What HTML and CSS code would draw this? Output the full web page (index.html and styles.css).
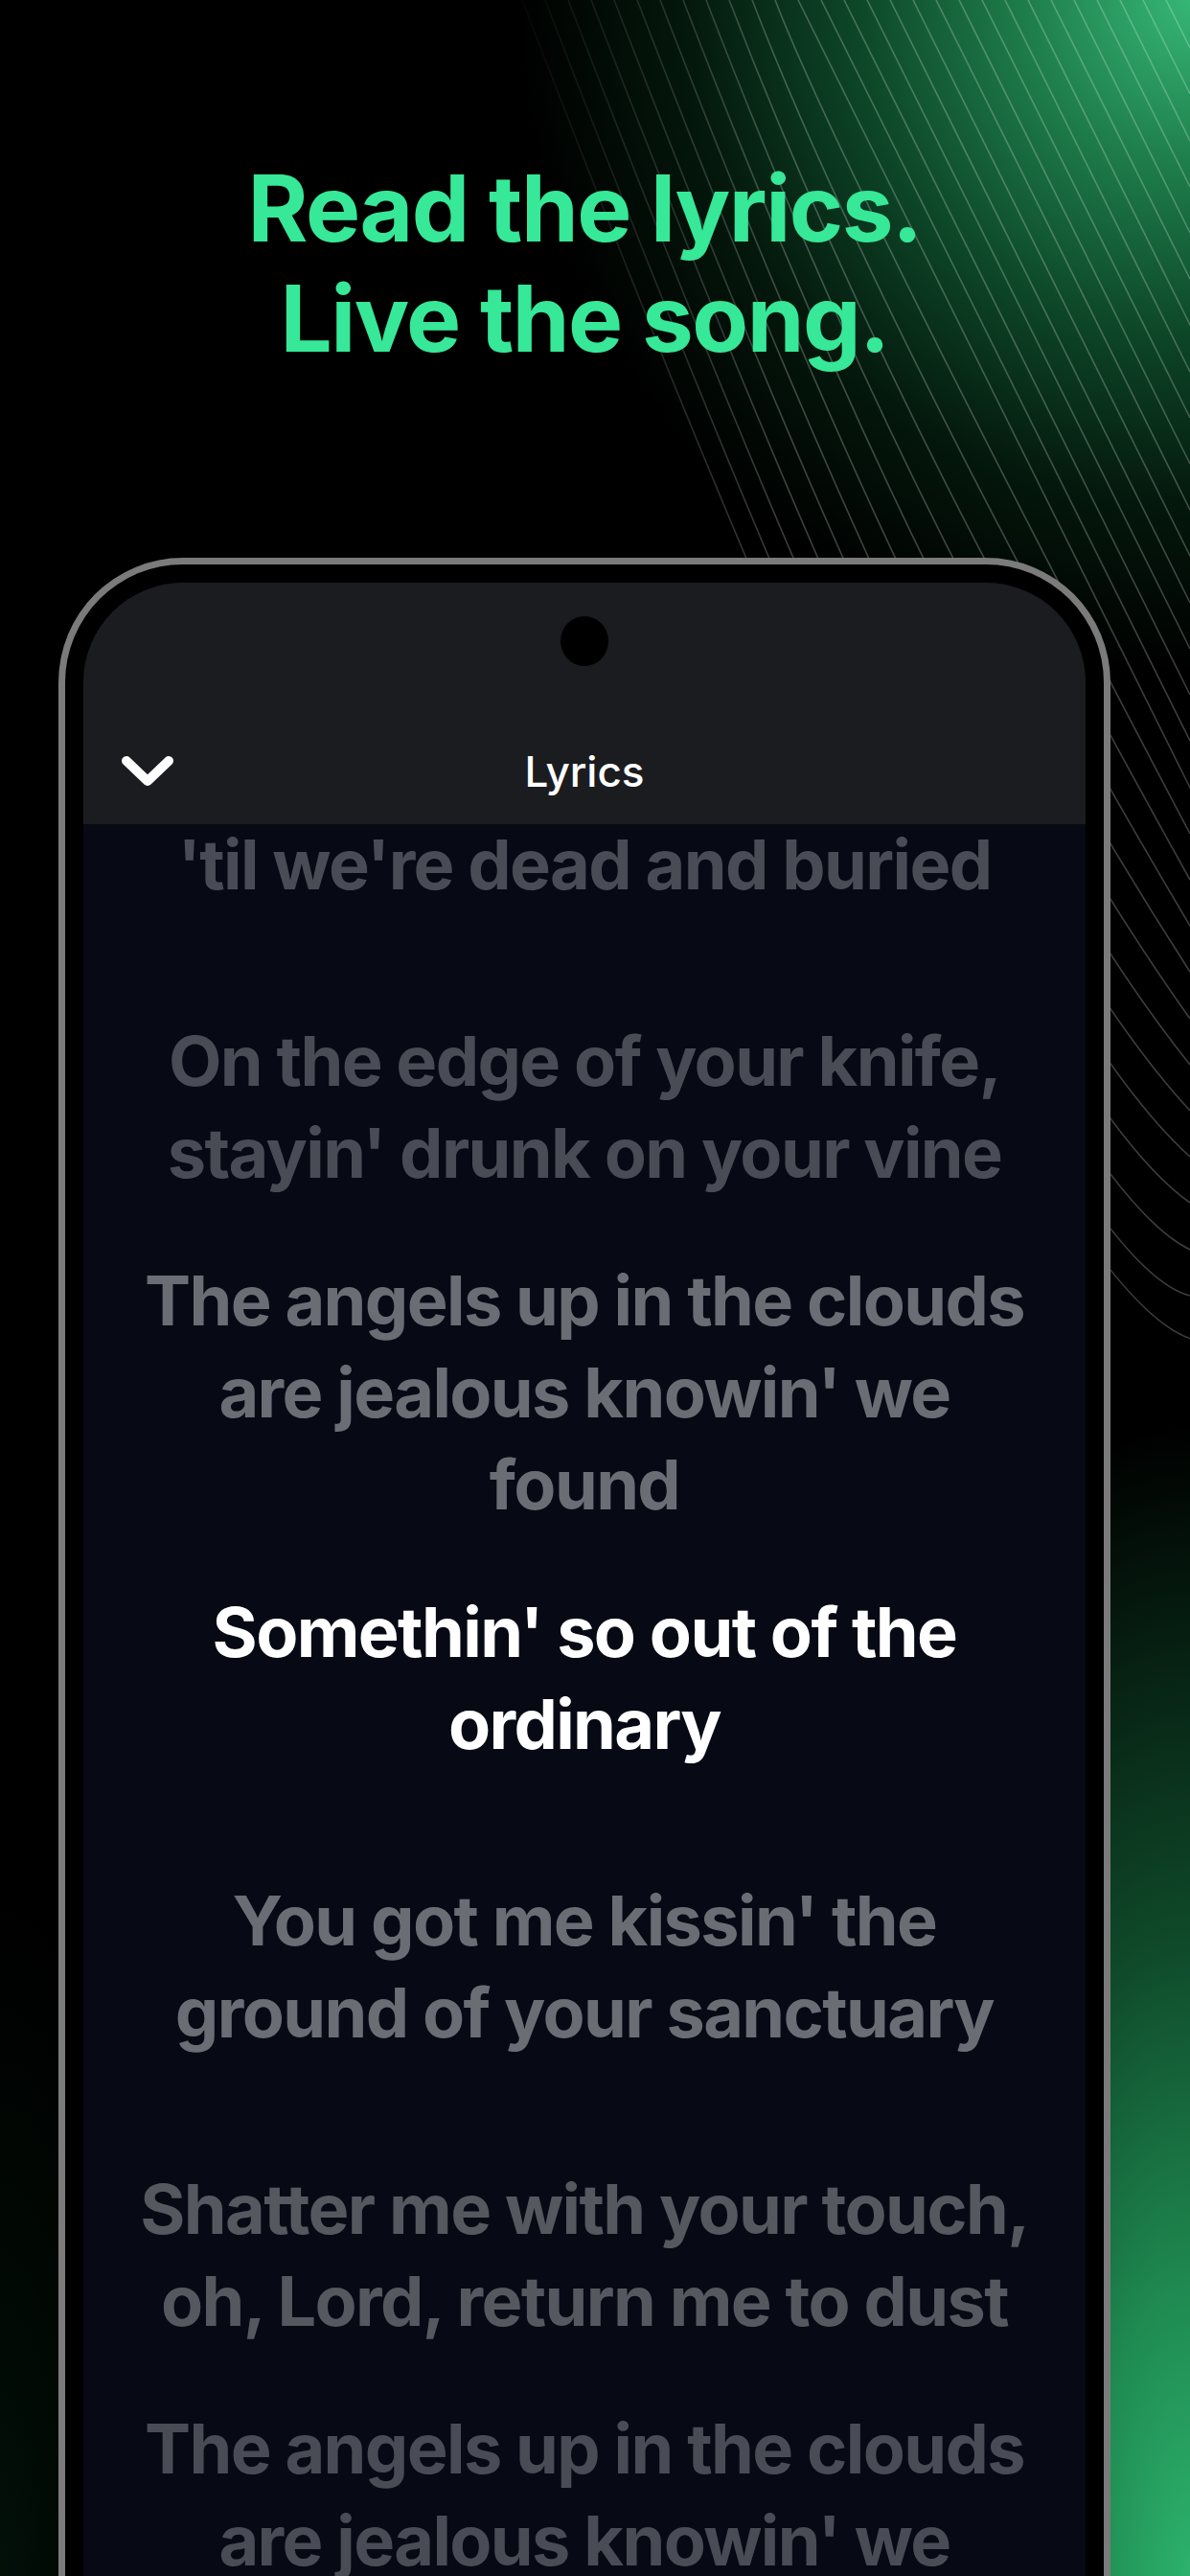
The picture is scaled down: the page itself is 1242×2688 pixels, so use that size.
FILE: index.html
```html
<!DOCTYPE html>
<html lang="en">
<head>
    <meta charset="UTF-8">
    <meta name="viewport" content="width=device-width, initial-scale=1.0">
    <title>Lyrics</title>
    <link rel="stylesheet" href="styles.css">
</head>
<body>

    <!-- Background line pattern -->
    <svg class="bg-lines" width="1242" height="2688" viewBox="0 0 1242 2688">
        <defs>
            <linearGradient id="fade" gradientUnits="userSpaceOnUse" x1="520" y1="0" x2="820" y2="0">
                <stop offset="0" stop-color="#fff" stop-opacity="0"/>
                <stop offset="1" stop-color="#fff" stop-opacity="0.24"/>
            </linearGradient>
        </defs>
        <g fill="none" stroke="url(#fade)" stroke-width="1.6">
            <path d="M545 0 Q1083.5 1400 1260 1400"/>
            <path d="M569 0 Q1072.8 1310 1242 1352"/>
            <path d="M593 0 Q1061.1 1217 1242 1304"/>
            <path d="M617 0 Q1047.3 1119 1242 1255"/>
            <path d="M641 0 Q1033.1 1019 1242 1207"/>
            <path d="M665 0 Q1017.3 916 1242 1159"/>
            <path d="M689 0 Q999.8 808 1242 1111"/>
            <path d="M713 0 Q980.4 695 1242 1063"/>
            <path d="M737 0 Q957.2 573 1242 1014"/>
            <path d="M761 0 Q933 447 1242 966"/>
            <path d="M785 0 Q906.3 315 1242 918"/>
            <path d="M809 0 Q876.6 176 1242 870"/>
            <path d="M833 0 L1242 822"/>
            <path d="M857 0 L1242 773"/>
            <path d="M881 0 L1242 725"/>
            <path d="M905 0 L1242 677"/>
            <path d="M929 0 L1242 629"/>
            <path d="M953 0 L1242 580"/>
            <path d="M977 0 L1242 532"/>
            <path d="M1001 0 L1242 484"/>
            <path d="M1025 0 L1242 436"/>
            <path d="M1049 0 L1242 388"/>
            <path d="M1073 0 L1242 339"/>
            <path d="M1097 0 L1242 291"/>
            <path d="M1121 0 L1242 243"/>
            <path d="M1145 0 L1242 195"/>
            <path d="M1169 0 L1242 147"/>
            <path d="M1193 0 L1242 98"/>
            <path d="M1217 0 L1242 50"/>
        </g>
    </svg>

    <main class="page">
        <h1 class="headline">Read the lyrics.<br>Live the song.</h1>

        <!-- Phone mockup -->
        <div class="phone">
            <div class="screen">
                <div class="top-bar">
                    <div class="camera"></div>
                    <div class="app-bar">
                        <svg class="chevron" width="58" height="36" viewBox="0 0 58 36">
                            <polyline points="7,7 29,28 51,7" fill="none" stroke="#fff" stroke-width="10" stroke-linecap="round" stroke-linejoin="round"/>
                        </svg>
                        <span class="title">Lyrics</span>
                        <span></span>
                    </div>
                </div>

                <div class="lyrics">
                    <p class="verse faded">'til we're dead and buried</p>
                    <p class="verse far faded">On the edge of your knife,<br>stayin' drunk on your vine</p>
                    <p class="verse near">The angels up in the clouds<br>are jealous knowin' we<br>found</p>
                    <p class="verse active">Somethin' so out of the<br>ordinary</p>
                    <p class="verse far near">You got me kissin' the<br>ground of your sanctuary</p>
                    <p class="verse far mid">Shatter me with your touch,<br>oh, Lord, return me to dust</p>
                    <p class="verse faded">The angels up in the clouds<br>are jealous knowin' we</p>
                </div>
            </div>
        </div>
    </main>

</body>
</html>
```

FILE: styles.css
```css
* {
    margin: 0;
    padding: 0;
    box-sizing: border-box;
}
body {
    width: 1242px;
    height: 2688px;
    overflow: hidden;
    position: relative;
    font-family: Inter, "Liberation Sans", sans-serif;
    background:
        radial-gradient(ellipse 700px 700px at 100% 0%, #36b676 0%, #1e7c4a 25%, #0d4628 50%, #04180c 75%, rgba(0,0,0,0) 100%),
        radial-gradient(ellipse 430px 1200px at 100% 100%, #2db26c 0%, #1f8a51 25%, #0f4a2a 55%, rgba(0,0,0,0) 100%),
        radial-gradient(ellipse 160px 700px at 0% 100%, #021008 0%, rgba(0,0,0,0) 100%),
        #000;
}
/* decorative lines behind everything */
.bg-lines {
    position: absolute;
    top: 0;
    left: 0;
}
.page {
    position: relative;
    width: 1098px;
    margin-left: 61px;
}
.headline {
    padding-top: 160px;
    font-size: 96px;
    line-height: 115px;
    font-weight: 700;
    letter-spacing: -1.5px;
    color: #36e897;
    text-align: center;
}
/* Phone */
.phone {
    margin-top: 192px;
    height: 2200px;
    background: #000;
    border: 7px solid #7b7b7b;
    border-bottom: none;
    border-radius: 130px 130px 0 0;
    padding: 19px 19px 0;
}
.screen {
    height: 100%;
    border-radius: 104px 104px 0 0;
    overflow: hidden;
    background: #070914;
}
.top-bar {
    height: 252px;
    background: #1b1c20;
    padding-top: 35px;
}
.camera {
    width: 50px;
    height: 52px;
    margin: 0 auto;
    border-radius: 50%;
    background: #000;
}
.app-bar {
    margin-top: 55px;
    height: 110px;
    padding: 0 38px;
    display: grid;
    grid-template-columns: 1fr auto 1fr;
    align-items: center;
}
.title {
    color: #fff;
    font-size: 44px;
    font-weight: 500;
}
/* Lyrics */
.lyrics {
    margin-top: -6px;
    text-align: center;
}
.verse {
    font-size: 72px;
    line-height: 96px;
    font-weight: 700;
    letter-spacing: -1.6px;
    white-space: nowrap;
    color: #4a4c55;
    margin-top: 58px;
}
.verse:first-child {
    margin-top: 0;
}
.verse.far {
    margin-top: 109px;
}
.faded {
    color: #4a4c55;
}
.mid {
    color: #56585f;
}
.near {
    color: #6b6d75;
}
.active {
    color: #fff;
}
```
